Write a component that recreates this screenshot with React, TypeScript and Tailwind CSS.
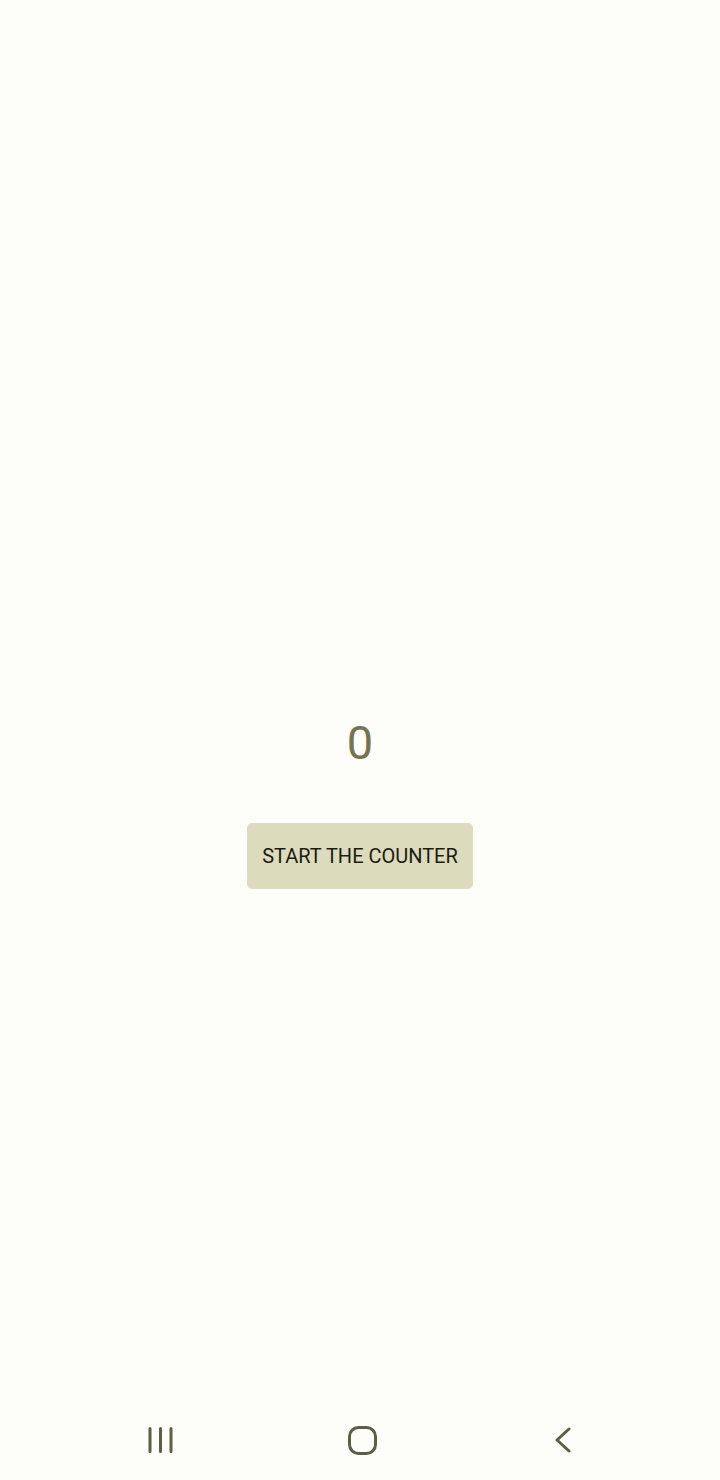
import { useState } from 'react';

export default function App() {
  const [count, setCount] = useState(0);

  return (
    <div
      className="h-[1480px] w-[720px] bg-[#fdfdf9] flex flex-col"
      style={{ fontFamily: 'Roboto, "Noto Sans", sans-serif' }}
    >
      {/* Content */}
      <main className="flex-1 flex flex-col items-center pt-[718px]">
        <div className="text-[47px] leading-[50px] text-[#74744e]">{count}</div>
        <button
          onClick={() => setCount((c) => c + 1)}
          className="mt-[55px] w-[226px] h-[66px] rounded-[5px] bg-[#dcdbbb] text-[20px] text-[#1b1b12]"
        >
          START THE COUNTER
        </button>
      </main>

      {/* Navigation bar */}
      <nav className="h-[88px] flex items-center pl-[148px] pt-[8px]">
        <svg width="25" height="26" viewBox="0 0 25 26" fill="none">
          <path d="M2 1.5v23M12.5 1.5v23M23 1.5v23" stroke="#5e5e48" strokeWidth="3" strokeLinecap="round" />
        </svg>
        <svg width="29" height="29" viewBox="0 0 29 29" fill="none" className="ml-[175px]">
          <rect x="1.5" y="1.5" width="26" height="26" rx="9" stroke="#5e5e48" strokeWidth="3" />
        </svg>
        <svg width="18" height="26" viewBox="0 0 18 26" fill="none" className="ml-[176px]">
          <path d="M16 2 4 13l12 11" stroke="#5e5e48" strokeWidth="3" strokeLinecap="round" strokeLinejoin="round" />
        </svg>
      </nav>
    </div>
  );
}
